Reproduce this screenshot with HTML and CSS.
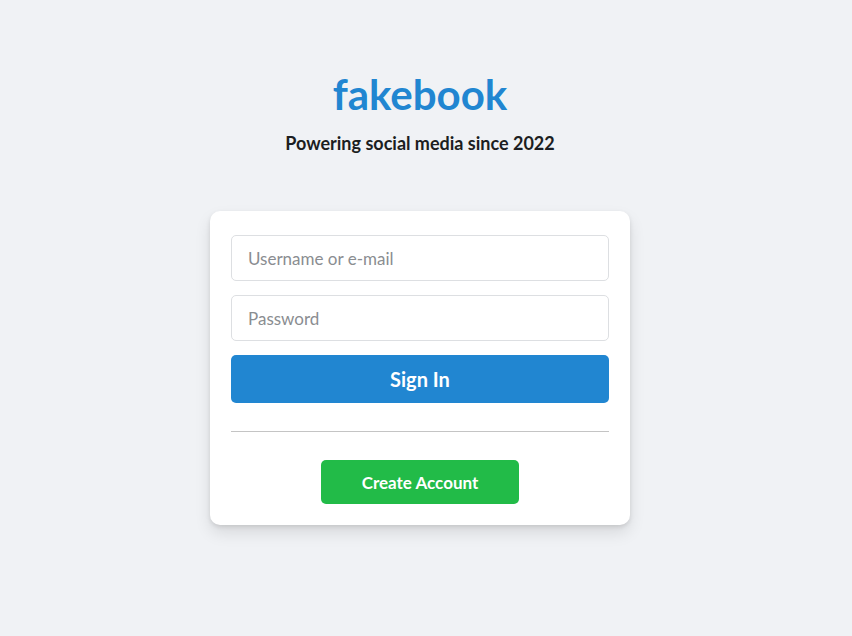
FILE: index.html
```html
<!DOCTYPE html>
<html lang="en">
<head>
<meta charset="utf-8">
<title>fakebook</title>
<link rel="stylesheet" href="styles.css">
</head>
<body>
<main class="page">
  <header class="brand">
    <h1 class="logo">fakebook</h1>
    <p class="tagline">Powering social media since 2022</p>
  </header>
  <form class="card">
    <input class="field" type="text" placeholder="Username or e-mail">
    <input class="field" type="password" placeholder="Password">
    <button class="btn-primary" type="button">Sign In</button>
    <hr class="divider">
    <div class="create-row">
      <button class="btn-create" type="button">Create Account</button>
    </div>
  </form>
</main>
</body>
</html>
```

FILE: styles.css
```css
* { box-sizing: border-box; }
html, body { margin: 0; padding: 0; }
body {
  background: #f0f2f5;
  font-family: Lato, "Open Sans", sans-serif;
  color: #1c1e21;
  width: 852px;
  height: 636px;
  overflow: hidden;
}
.page {
  display: flex;
  flex-direction: column;
  align-items: center;
  padding-right: 12px;
  padding-top: 68px;
}
.brand {
  display: flex;
  flex-direction: column;
  align-items: center;
}
.logo {
  margin: 0;
  font-size: 42px;
  line-height: 52px;
  font-weight: 700;
  color: #2186d1;
}
.tagline {
  margin: 12px 0 0;
  font-size: 18px;
  line-height: 22px;
  font-weight: 700;
  color: #1c1e21;
}
.card {
  margin-top: 57px;
  width: 420px;
  background: #fff;
  border-radius: 10px;
  box-shadow: 0 2px 4px rgba(0,0,0,0.1), 0 8px 16px rgba(0,0,0,0.1);
  padding: 24px 21px 21px;
  display: flex;
  flex-direction: column;
}
.field {
  height: 46px;
  border: 1px solid #dddfe2;
  border-radius: 5px;
  padding: 0 16px;
  font-family: inherit;
  font-size: 17px;
  color: #1c1e21;
  outline: none;
  margin-bottom: 14px;
}
.field::placeholder { color: #8a8d91; }
.btn-primary {
  height: 48px;
  border: none;
  border-radius: 5px;
  background: #2186d1;
  color: #fff;
  font-family: inherit;
  font-size: 20px;
  font-weight: 700;
}
.divider {
  margin: 28px 0 0;
  border: none;
  border-top: 1px solid #c4c4c4;
  height: 0;
}
.create-row {
  display: flex;
  justify-content: center;
  margin-top: 28px;
}
.btn-create {
  width: 198px;
  height: 44px;
  border: none;
  border-radius: 5px;
  background: #22bb48;
  color: #fff;
  font-family: inherit;
  font-size: 17px;
  font-weight: 700;
}
```
